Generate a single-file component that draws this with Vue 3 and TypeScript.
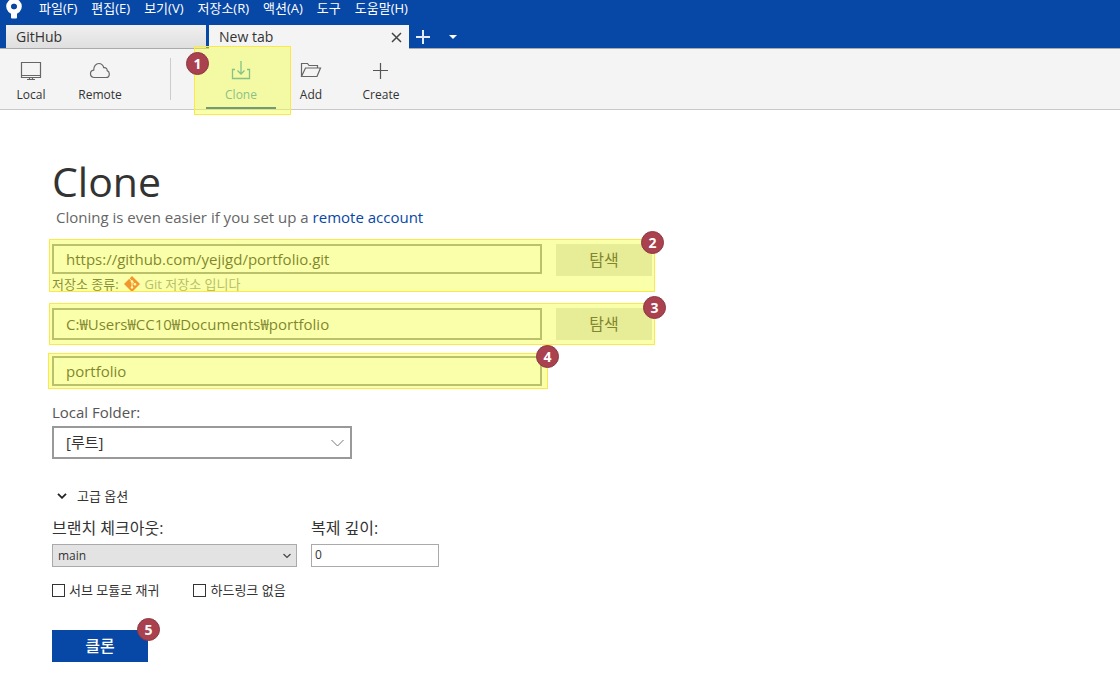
<script setup lang="ts">
import { ref } from 'vue'

const menus: string[] = ['파일(F)', '편집(E)', '보기(V)', '저장소(R)', '액션(A)', '도구', '도움말(H)']

const sourceUrl = ref('https://github.com/yejigd/portfolio.git')
const destination = ref('C:₩Users₩CC10₩Documents₩portfolio')
const bookmark = ref('portfolio')
const folder = ref('root')
const branch = ref('main')
const depth = ref('0')
const recursive = ref(false)
const noHardlinks = ref(false)
</script>

<template>
  <div class="window">
    <header class="titlebar">
      <div class="menu-row">
        <svg class="logo" width="18" height="20" viewBox="0 0 18 20" aria-hidden="true">
          <path d="M6 11h6v6.500a1 1 0 0 1-1 1H7a1 1 0 0 1-1-1z" fill="#fff" />
          <circle cx="9" cy="6.500" r="5.300" fill="none" stroke="#fff" stroke-width="5" />
          <circle cx="9" cy="6.500" r="2.800" fill="#0747a6" />
        </svg>
        <nav class="menus">
          <button v-for="m in menus" :key="m" type="button">{{ m }}</button>
        </nav>
      </div>
      <div class="tabs">
        <button type="button" class="tab">GitHub</button>
        <div class="tab active">
          <span>New tab</span>
          <button type="button" class="icon-button" aria-label="Close tab">
            <svg width="11" height="11" viewBox="0 0 11 11"><path d="M1 1l9 9M10 1l-9 9" stroke="#444" stroke-width="1.500" /></svg>
          </button>
        </div>
        <button type="button" class="icon-button add-tab" aria-label="New tab">
          <svg width="14" height="14" viewBox="0 0 14 14"><path d="M7 0v14M0 7h14" stroke="#e4ecfa" stroke-width="2" /></svg>
        </button>
        <button type="button" class="icon-button more-tabs" aria-label="Tab list">
          <svg width="8" height="4" viewBox="0 0 8 4"><path d="M0 0h8L4 4z" fill="#fff" /></svg>
        </button>
      </div>
    </header>

    <nav class="toolbar">
      <button type="button" class="tool local">
        <svg width="22" height="22" viewBox="0 0 22 22" fill="none" stroke="#666" stroke-width="1.200">
          <path d="M1.500 2.500h19v15h-19zM1.500 15.500h19M9.500 17.500v2M12.500 17.500v2M7 19.500h8" />
        </svg>
        <span>Local</span>
      </button>
      <button type="button" class="tool remote">
        <svg width="22" height="22" viewBox="0 0 22 22" fill="none" stroke="#666" stroke-width="1.200">
          <path d="M5.500 17.500C3 17.500 1.500 15.800 1.500 13.800c0-2 1.400-3.500 3.200-3.700C4.600 6.200 7 3.500 9.800 3.500c2.500 0 4.300 1.700 4.900 4.100 2.500-.3 3.600 1.300 3.500 3 1.300.5 2.100 1.800 2.100 3.300 0 2.100-1.500 3.600-3.300 3.600z" />
        </svg>
        <span>Remote</span>
      </button>
      <span class="separator"></span>
      <div class="marked mark-clone">
        <button type="button" class="tool current">
          <svg width="22" height="22" viewBox="0 0 22 22" fill="none" stroke="#2f8fc0" stroke-width="1.300">
            <path d="M5 9.500H2.500v9h17v-9H17M11 1v13M7.500 10.500L11 14l3.500-3.500" />
          </svg>
          <span>Clone</span>
        </button>
        <i class="highlight"></i>
        <b class="badge">1</b>
      </div>
      <button type="button" class="tool">
        <svg width="22" height="22" viewBox="0 0 22 22" fill="none" stroke="#666" stroke-width="1.200">
          <path d="M1.500 16V3.500h6l1.500 2h8.500V8M1.500 16.500L5.500 8h15l-3.500 8.500z" />
        </svg>
        <span>Add</span>
      </button>
      <button type="button" class="tool">
        <svg width="22" height="22" viewBox="0 0 22 22" fill="none" stroke="#555" stroke-width="1.200">
          <path d="M10.500 3v16M3 10.500h15" />
        </svg>
        <span>Create</span>
      </button>
    </nav>

    <main class="page">
      <h1>Clone</h1>
      <p class="hint">Cloning is even easier if you set up a <a href="#remote">remote account</a></p>

      <form @submit.prevent>
        <div class="marked mark-source">
          <div class="field-row">
            <input v-model="sourceUrl" class="field" type="text" aria-label="Source URL" />
            <button type="button" class="browse">탐색</button>
          </div>
          <p class="repo-kind">
            <span>저장소 종류:</span>
            <svg width="16" height="16" viewBox="0 0 16 16" aria-hidden="true">
              <path d="M8 0l8 8-8 8-8-8z" fill="#f4411e" />
              <path d="M5 2l3 3.500v6M8.200 5.500l3 3" stroke="#fff" fill="none" />
              <circle cx="8" cy="5.500" r="1.300" fill="#fff" /><circle cx="8" cy="11.500" r="1.300" fill="#fff" /><circle cx="11" cy="8.300" r="1.300" fill="#fff" />
            </svg>
            <span class="kind">Git 저장소 입니다</span>
          </p>
          <i class="highlight"></i>
          <b class="badge">2</b>
        </div>

        <div class="marked mark-destination">
          <div class="field-row">
            <input v-model="destination" class="field tall" type="text" aria-label="Destination path" />
            <button type="button" class="browse">탐색</button>
          </div>
          <i class="highlight"></i>
          <b class="badge">3</b>
        </div>

        <div class="marked mark-name">
          <input v-model="bookmark" class="field" type="text" aria-label="Name" />
          <i class="highlight"></i>
          <b class="badge">4</b>
        </div>

        <label class="folder-label" for="folder">Local Folder:</label>
        <div class="select folder">
          <select id="folder" v-model="folder"><option value="root">[루트]</option></select>
          <svg width="13" height="7" viewBox="0 0 13 7"><path d="M.5.500l6 6 6-6" fill="none" stroke="#777" /></svg>
        </div>

        <button type="button" class="advanced" aria-expanded="true">
          <svg width="10" height="6" viewBox="0 0 10 6"><path d="M1 .8l4 4 4-4" fill="none" stroke="#222" stroke-width="1.800" /></svg>
          <span>고급 옵션</span>
        </button>

        <div class="options">
          <div class="option branch">
            <label for="branch">브랜치 체크아웃:</label>
            <div class="select small">
              <select id="branch" v-model="branch"><option value="main">main</option></select>
              <svg width="8" height="5" viewBox="0 0 8 5"><path d="M.5.500L4 4 7.500.500" fill="none" stroke="#444" stroke-width="1.200" /></svg>
            </div>
          </div>
          <div class="option depth">
            <label for="depth">복제 깊이:</label>
            <input id="depth" v-model="depth" type="text" />
          </div>
        </div>

        <div class="checks">
          <label><input v-model="recursive" type="checkbox" /><span>서브 모듈로 재귀</span></label>
          <label><input v-model="noHardlinks" type="checkbox" /><span>하드링크 없음</span></label>
        </div>

        <div class="marked mark-submit">
          <button type="submit" class="submit">클론</button>
          <b class="badge">5</b>
        </div>
      </form>
    </main>
  </div>
</template>

<style>
body {
  margin: 0;
  background: #fff;
}
</style>

<style scoped>
.window {
  min-height: 100vh;
  color: #333;
  font-family: "Open Sans", "Noto Sans CJK KR", sans-serif;
  font-size: 12px;
  line-height: 16px;
}
.window *,
.window *::before {
  box-sizing: border-box;
}
button,
input,
select {
  margin: 0;
  padding: 0;
  border: 0;
  border-radius: 0;
  background: none;
  color: inherit;
  font: inherit;
}
svg {
  display: block;
  flex: none;
}
.titlebar {
  background: #0747a6;
}
.menu-row {
  display: flex;
  align-items: flex-start;
  height: 25px;
  padding-left: 5px;
}
.menus {
  display: flex;
  gap: 14px;
  padding-left: 16px;
}
.menus button {
  color: #fff;
  font-size: 13px;
  line-height: 16px;
  white-space: nowrap;
}
.tabs {
  display: flex;
  gap: 3px;
  height: 24px;
  padding-left: 6px;
  border-bottom: 1px solid #aaa;
}
.tab {
  display: flex;
  align-items: center;
  justify-content: space-between;
  width: 200px;
  height: 23px;
  padding: 0 7px 0 10px;
  background: linear-gradient(#f0f0f0, #dfdfdf);
  font-size: 14px;
}
.tab.active {
  height: 24px;
  background: #f4f4f4;
}
.icon-button {
  display: flex;
  align-items: center;
  justify-content: center;
}
.add-tab {
  width: 22px;
}
.more-tabs {
  width: 32px;
}
.toolbar {
  display: flex;
  height: 61px;
  background: #f4f4f4;
  border-bottom: 1px solid #c8c8c8;
}
.tool {
  display: flex;
  flex-direction: column;
  align-items: center;
  gap: 5px;
  width: 70px;
  height: 60px;
  padding-top: 11px;
}
.tool.local {
  width: 62px;
}
.tool.remote {
  width: 76px;
}
.separator {
  width: 1px;
  height: 42px;
  margin: 9px 35px 0 32px;
  background: #ccc;
}
.tool.current {
  border-bottom: 2px solid #0747a6;
  color: #2f8fc0;
}
.marked {
  position: relative;
}
.highlight {
  position: absolute;
  border: 1px solid #fbe94a;
  background: rgba(245, 255, 66, 0.45);
  pointer-events: none;
}
.badge {
  position: absolute;
  width: 23px;
  height: 23px;
  border: 1px solid #8c3a42;
  border-radius: 50%;
  background: #a9414e;
  color: #fff;
  font-size: 14px;
  font-weight: 700;
  line-height: 21px;
  text-align: center;
}
.mark-clone .highlight {
  inset: -3px -15px -6px -12px;
}
.mark-clone .badge {
  left: -20px;
  top: 3px;
}
.page {
  padding: 48px 52px 24px;
}
h1 {
  margin: 0;
  color: #333;
  font-size: 41px;
  font-weight: 400;
  line-height: 47px;
}
.hint {
  margin: 0 4px;
  color: #666;
  font-size: 15px;
  line-height: 24px;
}
.hint a {
  color: #0747a6;
  text-decoration: none;
}
.mark-source,
.mark-destination {
  max-width: 600px;
}
.mark-source {
  margin-top: 15px;
}
.mark-source .highlight {
  inset: -5px -3px 0 -3px;
}
.mark-source .badge {
  right: -12px;
  top: -13px;
}
.field-row {
  display: flex;
  gap: 14px;
}
.field {
  flex: 1;
  min-width: 0;
  width: 100%;
  height: 30px;
  padding: 0 12px;
  border: 2px solid #8c8c8c;
  background: #fff;
  color: #222;
  font-size: 15px;
}
.field.tall {
  height: 32px;
  padding-bottom: 2px;
}
.browse {
  width: 96px;
  height: 32px;
  background: #dcdcdc;
  color: #222;
  font-size: 16px;
}
.repo-kind {
  display: flex;
  align-items: center;
  gap: 5px;
  height: 16px;
  margin: 0;
  font-size: 13px;
}
.repo-kind .kind {
  color: #888;
}
.mark-destination {
  margin-top: 16px;
}
.mark-destination .highlight {
  inset: -5px -3px;
}
.mark-destination .badge {
  right: -14px;
  top: -12px;
}
.mark-name {
  display: flex;
  max-width: 490px;
  margin-top: 16px;
}
.mark-name .highlight {
  inset: -3px -6px -3px -4px;
}
.mark-name .badge {
  right: -17px;
  top: -11px;
}
.folder-label {
  display: block;
  margin-top: 16px;
  color: #555;
  font-size: 15px;
  line-height: 20px;
}
.select {
  position: relative;
  display: flex;
}
.select select {
  width: 100%;
  appearance: none;
  border: 2px solid #999;
  background: #fff;
}
.select svg {
  position: absolute;
  right: 8px;
  top: 50%;
  transform: translateY(-50%);
  pointer-events: none;
}
.folder {
  max-width: 300px;
  margin-top: 4px;
}
.folder select {
  height: 33px;
  padding: 0 12px 2px;
  font-size: 15px;
  line-height: 26px;
}
.advanced {
  display: flex;
  align-items: center;
  gap: 10px;
  margin: 29px 0 0 5px;
  font-size: 13px;
}
.options {
  display: flex;
  gap: 14px;
  margin-top: 14px;
}
.option {
  display: flex;
  flex-direction: column;
  gap: 6px;
}
.option label {
  font-size: 16px;
  line-height: 20px;
}
.branch {
  width: 245px;
}
.depth {
  width: 128px;
}
.small select {
  height: 23px;
  padding: 0 5px;
  border: 1px solid #aaa;
  background: #e3e3e3;
}
.small svg {
  right: 6px;
}
.depth input {
  height: 23px;
  padding: 0 3px 2px;
  border: 1px solid #aaa;
  background: #fff;
}
.checks {
  display: flex;
  gap: 34px;
  margin-top: 15px;
  font-size: 13px;
}
.checks label {
  display: flex;
  align-items: center;
  gap: 4px;
}
.checks input {
  width: 13px;
  height: 13px;
  appearance: none;
  border: 1px solid #333;
  background: #fff;
}
.checks input:checked {
  background: #0747a6;
}
.mark-submit {
  width: 96px;
  margin-top: 32px;
}
.submit {
  display: block;
  width: 96px;
  height: 32px;
  background: #0747a6;
  color: #fff;
  font-size: 16px;
  font-weight: 500;
}
.mark-submit .badge {
  right: -12px;
  top: -12px;
}
</style>
